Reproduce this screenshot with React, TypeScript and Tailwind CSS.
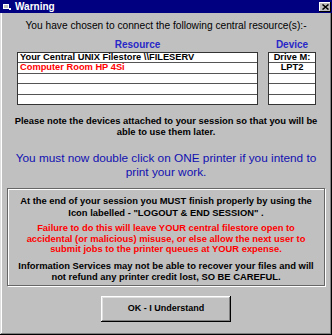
import React from "react";

const Row = ({ text, red, center, last }: { text?: string; red?: boolean; center?: boolean; last?: boolean }) => (
  <div
    className={`flex-1 flex items-center px-[2px] text-[9.3px] font-bold leading-none ${last ? "" : "border-b border-[#555]"} ${red ? "text-[#ff0000]" : "text-black"} ${center ? "justify-center" : ""}`}
  >
    {text}
  </div>
);

export default function App() {
  return (
    <div
      className="w-[332px] h-[335px] bg-[#c0c0c0] relative flex flex-col p-[2px] pt-0 shadow-[inset_-1px_-1px_#000,inset_1px_1px_#dfdfdf,inset_-2px_-2px_#808080,inset_2px_2px_#fff]"
      style={{ fontFamily: '"Liberation Sans", Arial, sans-serif' }}
    >
      {/* title bar */}
      <div className="h-[13px] bg-[#000080] flex items-center pl-[2px] pr-[1px] -mx-[2px] mt-0">
        <svg width="9" height="8" viewBox="0 0 9 8" className="mr-[3px] ml-[1px]">
          <rect x="0" y="1" width="6" height="5" fill="#fff" />
          <rect x="1" y="2" width="4" height="3" fill="#c0c0c0" />
          <rect x="6" y="5" width="2" height="2" fill="#fff" />
        </svg>
        <span className="text-white text-[10px] font-bold leading-none">Warning</span>
        <div className="ml-auto w-[12px] h-[10px] bg-[#c0c0c0] flex items-center justify-center shadow-[inset_-1px_-1px_#000,inset_1px_1px_#fff]">
          <svg width="7" height="6" viewBox="0 0 7 6">
            <path d="M0.5 0.5 L6.5 5.5 M6.5 0.5 L0.5 5.5" stroke="#000" strokeWidth="1.5" />
          </svg>
        </div>
      </div>

      <div className="mt-[7px] text-center text-[10.2px] leading-[12px] text-black">
        You have chosen to connect the following central resource(s):-
      </div>

      <div className="mt-[7px] flex">
        <div className="ml-[15px] w-[241px] text-center text-[10px] font-bold leading-[12px] text-[#2828c8]">Resource</div>
        <div className="ml-[10px] w-[48px] text-center text-[10px] font-bold leading-[12px] text-[#2828c8]">Device</div>
      </div>

      <div className="mt-[1px] flex h-[53px]">
        <div className="ml-[15px] w-[241px] bg-white border border-[#333] flex flex-col">
          <Row text="Your Central UNIX Filestore \\FILESERV" />
          <Row text="Computer Room HP 4Si" red />
          <Row />
          <Row />
          <Row last />
        </div>
        <div className="ml-[10px] w-[48px] bg-white border border-[#333] flex flex-col">
          <Row text="Drive M:" center />
          <Row text="LPT2" center />
          <Row />
          <Row />
          <Row last />
        </div>
      </div>

      <div className="mt-[10px] text-center text-[9.4px] font-bold leading-[11px] text-black">
        Please note the devices attached to your session so that you will be
        <br />
        able to use them later.
      </div>

      <div className="mt-[14px] text-center text-[11.8px] leading-[14px] text-[#1010b0]">
        You must now double click on ONE printer if you intend to
        <br />
        print your work.
      </div>

      <div className="mt-[9px] mx-[5px] h-[98px] border border-[#666] shadow-[1px_1px_0_#fff,inset_1px_1px_0_#fff] flex flex-col items-center pt-[6px] text-[9.4px] font-bold leading-[11.5px] text-center">
        <div className="text-black">
          At the end of your session you MUST finish properly by using the
          <br />
          Icon labelled - "LOGOUT &amp; END SESSION" .
        </div>
        <div className="mt-[5px] text-[#ff0000] leading-[10.5px]">
          Failure to do this will leave YOUR central filestore open to
          <br />
          accidental (or malicious) misuse, or else allow the next user to
          <br />
          submit jobs to the printer queues at YOUR expense.
        </div>
        <div className="mt-[5px] text-black">
          Information Services may not be able to recover your files and will
          <br />
          not refund any printer credit lost, SO BE CAREFUL.
        </div>
      </div>

      <div className="mt-[10px] flex justify-center">
        <div className="w-[130px] h-[26px] flex items-center justify-center text-[9px] font-bold text-black shadow-[inset_-1px_-1px_#000,inset_1px_1px_#fff,inset_-2px_-2px_#808080,inset_2px_2px_#dfdfdf]">
          OK - I Understand
        </div>
      </div>
    </div>
  );
}
